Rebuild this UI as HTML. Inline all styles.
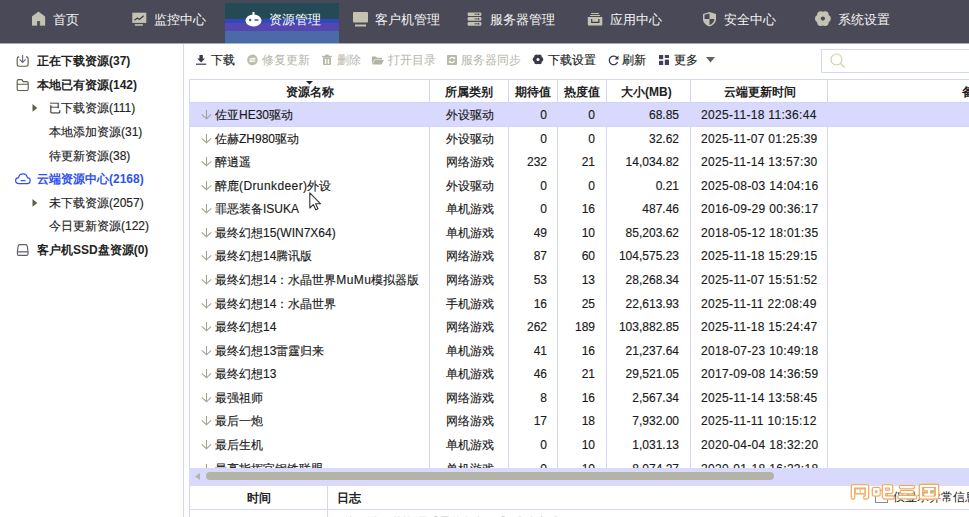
<!DOCTYPE html>
<html><head><meta charset="utf-8">
<style>
*{margin:0;padding:0;box-sizing:border-box}
html,body{width:969px;height:517px;overflow:hidden;background:#fff}
body{position:relative;font-family:"Liberation Sans",sans-serif;font-size:12px;color:#222}
.abs{position:absolute}
/* nav */
#nav{position:absolute;left:0;top:0;width:969px;height:43px;background:#4a4957}
#nav .it{position:absolute;top:11.5px;height:16px;color:#f4f4f4;font-size:12.6px;line-height:16px;white-space:nowrap}
#nav svg{position:absolute}
#act{position:absolute;left:225px;top:0;width:114px;height:43px;
 background:linear-gradient(#4a4957 0,#4a4957 3px,#244a56 3px,#244a56 19px,#3148bd 19px,#3148bd 23px,#5546b0 23px,#5546b0 31px,#4a6aa8 31px,#4a6aa8 43px)}
/* sidebar */
#side{position:absolute;left:0;top:43px;width:184px;height:474px;border-right:1px solid #d4d4fd}
#navb{position:absolute;left:0;top:43px;width:969px;height:1px;background:#a9a8b0}
.si{position:absolute;white-space:nowrap;font-size:12px;line-height:16px;color:#222;-webkit-text-stroke-width:0.15px}
.si.b{font-weight:bold;color:#222;-webkit-text-stroke-width:0}
/* toolbar */
.tb{position:absolute;top:52px;font-size:12px;line-height:16px;white-space:nowrap;color:#1a1a1a;-webkit-text-stroke-width:0.15px}
.tb.dis{color:#b5b5ab;-webkit-text-stroke-width:0}
#search{position:absolute;left:821px;top:49px;width:160px;height:24px;border:1px solid #d4d4fd;background:#fff}
/* table */
#grid{position:absolute;left:189px;top:79px;width:800px;height:389px;border-left:1px solid #d4d4fd;border-top:1px solid #d4d4fd;overflow:hidden}
.vl{position:absolute;top:79px;width:1px;height:389px;background:#d4d4fd}
.hd{position:absolute;top:84px;font-weight:bold;font-size:12px;line-height:16px;white-space:nowrap;color:#222}
.row{position:absolute;left:189px;width:780px;height:24px;font-size:12px;line-height:24px;white-space:nowrap;color:#1a1a1a;-webkit-text-stroke-width:0.15px}
.row.sel{background:#d9d9fe;z-index:2;height:25px;border-top:1px solid #d2d2fd;border-bottom:1px solid #d2d2fd}
.row.sel span{top:0}
.row.sel .arr{top:6px}
.row span{position:absolute;top:1px}
.arr{position:absolute;left:12px;top:7px}
.c0{left:26px}
.c1{left:257px}
.c2{left:298px;width:60px;text-align:right}
.c3{left:346px;width:60px;text-align:right}
.c4{left:400px;width:90px;text-align:right}
.c5{left:512px;letter-spacing:0.32px}
/* scrollbar */
#hs{position:absolute;left:189px;top:468px;width:780px;height:18px;background:#d9d9fe}
#thumb{position:absolute;left:17px;top:3.5px;width:568px;height:8.5px;border-radius:4.5px;background:#b4b4a6}
/* log table */
#log{position:absolute;left:189px;top:486px;width:780px;height:31px;border-left:1px solid #d4d4fd}
</style></head><body>
<div id="nav">
  <div id="act"></div>
  <!-- home -->
  <svg style="left:32px;top:11px" width="14" height="15" viewBox="0 0 14 15"><path d="M6.5 0.8 L13 5.6 V14.4 H8.1 V9.9 H5 V14.4 H0 V5.6 Z" fill="#c4c3b2" stroke="#c4c3b2" stroke-width="0.3" stroke-linejoin="round"/></svg>
  <div class="it" style="left:53px">首页</div>
  <!-- monitor -->
  <svg style="left:132px;top:12px" width="16" height="15" viewBox="0 0 16 15"><rect x="0.3" y="0.7" width="14" height="10.2" fill="#c4c3b2"/><path d="M2.4 8.3 L5.4 6.1 L7.3 7.5 L11.7 3.7" stroke="#3c3b4a" stroke-width="1.2" fill="none"/><rect x="2.8" y="12.2" width="8.1" height="1.5" fill="#c4c3b2"/></svg>
  <div class="it" style="left:154px">监控中心</div>
  <!-- robot -->
  <svg style="left:245px;top:12px" width="17" height="15" viewBox="0 0 17 15"><rect x="7.5" y="0" width="2" height="3" fill="#fff"/><ellipse cx="8.5" cy="8.5" rx="8" ry="6" fill="#fff"/><circle cx="5.2" cy="8" r="1.2" fill="#3b50b6"/><rect x="9.5" y="7.3" width="4" height="1.5" fill="#3b50b6"/></svg>
  <div class="it" style="left:269px;color:#fff">资源管理</div>
  <!-- client -->
  <svg style="left:353px;top:12px" width="16" height="15" viewBox="0 0 16 15"><rect x="0" y="0" width="15" height="10.5" rx="1" fill="#c4c3b2"/><rect x="2" y="12.5" width="11" height="2" fill="#c4c3b2"/></svg>
  <div class="it" style="left:375px">客户机管理</div>
  <!-- server -->
  <svg style="left:467px;top:12px" width="16" height="15" viewBox="0 0 16 15"><g fill="#c4c3b2"><rect x="0.6" y="0.4" width="13.8" height="3.7" rx="1.3"/><rect x="0.6" y="5.1" width="13.8" height="3.7" rx="1.3"/><rect x="0.6" y="9.9" width="13.8" height="3.9" rx="1.3"/></g><g fill="#505068"><rect x="7.5" y="1.7" width="3" height="1"/><rect x="7.5" y="6.4" width="3" height="1"/><rect x="7.5" y="11.3" width="3" height="1"/></g><g fill="#2a2a33"><rect x="10.8" y="1.6" width="1.5" height="1.3"/><rect x="10.8" y="6.3" width="1.5" height="1.3"/><rect x="10.8" y="11.2" width="1.5" height="1.3"/></g></svg>
  <div class="it" style="left:490px">服务器管理</div>
  <!-- app -->
  <svg style="left:587px;top:12px" width="16" height="15" viewBox="0 0 16 15"><g fill="#c4c3b2"><rect x="4" y="0.9" width="8" height="1.2" rx="0.5"/><rect x="3" y="3" width="10.2" height="1.1" rx="0.5"/><path d="M0.8 5 H15.3 V12.5 Q15.3 13.4 14.4 13.4 H1.7 Q0.8 13.4 0.8 12.5 Z"/></g><path d="M4.7 7 V10.3 H11.9 V7" stroke="#3c3b4a" stroke-width="1.2" fill="none"/></svg>
  <div class="it" style="left:610px">应用中心</div>
  <!-- shield -->
  <svg style="left:703px;top:12px" width="14" height="15" viewBox="0 0 14 15"><path d="M6.5 0 L13 2 V7 C13 11 9.5 13.5 6.5 14.5 C3.5 13.5 0 11 0 7 V2 Z" fill="#c4c3b2"/><path d="M6.5 1.5 V7 H1.5 V2.8 Z M6.5 7 H11.5 C11.3 10 9 12.2 6.5 13 Z" fill="#4a4957"/></svg>
  <div class="it" style="left:724px">安全中心</div>
  <!-- gear -->
  <svg style="left:815px;top:11px" width="16" height="16" viewBox="0 0 16 16"><g fill="#c4c3b2"><circle cx="12.2" cy="7.6" r="3.6"/><circle cx="10.05" cy="11.3" r="3.6"/><circle cx="5.75" cy="11.3" r="3.6"/><circle cx="3.6" cy="7.6" r="3.6"/><circle cx="5.75" cy="3.85" r="3.6"/><circle cx="10.05" cy="3.85" r="3.6"/><circle cx="7.9" cy="7.6" r="4"/></g><circle cx="7.9" cy="7.6" r="2.1" fill="#4a4957"/></svg>
  <div class="it" style="left:838px">系统设置</div>
</div>

<div id="side"></div><div id="navb"></div><div class="abs" style="left:225px;top:43px;width:114px;height:1px;background:#a8b6d4"></div>
<!-- sidebar icons -->
<svg class="abs" style="left:15px;top:53px" width="15" height="15" viewBox="0 0 15 15"><path d="M4.3 3.9 H4 Q2.2 3.9 2.2 5.7 V11.5 Q2.2 13.2 4 13.2 H11.3 Q13.1 13.2 13.1 11.5 V5.7 Q13.1 3.9 11.3 3.9 H11" stroke="#5e5e48" stroke-width="1.15" fill="none"/><path d="M7.6 2 V9.3 M4.6 6.4 L7.6 9.4 L10.6 6.4" stroke="#6a6a80" stroke-width="1.15" fill="none"/></svg>
<div class="si b" style="left:37px;top:53px">正在下载资源(37)</div>
<svg class="abs" style="left:15px;top:77px" width="15" height="15" viewBox="0 0 15 15"><path d="M2.2 4 Q2.2 2.6 3.6 2.6 H6.8 L8.3 4.6 H11.8 Q13.2 4.6 13.2 6 V12 Q13.2 13.5 11.8 13.5 H3.6 Q2.2 13.5 2.2 12 Z M2.2 7.2 H13.2" stroke="#5e5e48" stroke-width="1.15" fill="none"/></svg>
<div class="si b" style="left:37px;top:77px">本地已有资源(142)</div>
<svg class="abs" style="left:32px;top:104px" width="6" height="9" viewBox="0 0 6 9"><path d="M0.5 0 L5.3 3.9 L0.5 7.8Z" fill="#5f5f4c"/></svg>
<div class="si" style="left:49px;top:100px">已下载资源(111)</div>
<div class="si" style="left:49px;top:124px">本地添加资源(31)</div>
<div class="si" style="left:49px;top:148px">待更新资源(38)</div>
<svg class="abs" style="left:14px;top:172px" width="18" height="14" viewBox="0 0 18 14"><path d="M5 11.6 C2.8 11.6 1.6 10.3 1.6 8.6 C1.6 7 2.8 5.8 4.5 5.7 C5 3.3 6.8 1.8 9 1.8 C11.3 1.8 13 3.4 13.4 5.7 C15 5.9 16.2 7.1 16.2 8.7 C16.2 10.4 15 11.6 13 11.6 Z" stroke="#3152ee" stroke-width="1.2" fill="none"/><path d="M7.2 8.6 H11" stroke="#3152ee" stroke-width="1.1" stroke-linecap="round"/></svg>
<div class="si b" style="left:37px;top:171px;color:#3152ee">云端资源中心(2168)</div>
<svg class="abs" style="left:32px;top:198.5px" width="6" height="9" viewBox="0 0 6 9"><path d="M0.5 0 L5.3 3.9 L0.5 7.8Z" fill="#5f5f4c"/></svg>
<div class="si" style="left:49px;top:195px">未下载资源(2057)</div>
<div class="si" style="left:49px;top:218px">今日更新资源(122)</div>
<svg class="abs" style="left:15px;top:242px" width="15" height="15" viewBox="0 0 15 15"><path d="M4.8 2.6 H10.6 Q12 2.6 12.2 4 L13 9.5 V12 Q13 13.4 11.6 13.4 H3.8 Q2.4 13.4 2.4 12 V9.5 L3.2 4 Q3.4 2.6 4.8 2.6 Z M2.4 9.8 H13" stroke="#5e5e6a" stroke-width="1.15" fill="none"/></svg>
<div class="si b" style="left:37px;top:242px">客户机SSD盘资源(0)</div>

<!-- toolbar -->
<svg class="abs" style="left:196px;top:55px" width="11" height="10" viewBox="0 0 11 10"><path d="M3.4 0 H6.8 V3.6 H9 L5.1 7.4 L1.2 3.6 H3.4 Z" fill="#3a3a48"/><rect x="0" y="8.6" width="10.2" height="1.2" fill="#3a3a48"/></svg>
<div class="tb" style="left:211px">下载</div>
<svg class="abs" style="left:247px;top:54px" width="11" height="12" viewBox="0 0 11 12"><circle cx="5.4" cy="5.9" r="5.3" fill="#bcbcac"/><g stroke="#fff" stroke-width="1.2" fill="none"><path d="M2.4 4.8 H8 M2.8 7.2 H8.4"/></g><g fill="#fff"><path d="M6.6 3.2 L8.8 4.8 L6.6 6 Z"/><path d="M4.2 5.8 L2 7.2 L4.2 8.6 Z"/></g></svg>
<div class="tb dis" style="left:262px">修复更新</div>
<svg class="abs" style="left:322px;top:54px" width="10" height="12" viewBox="0 0 10 12"><g fill="#b8b8a8"><rect x="3.2" y="0.6" width="3.6" height="1.6" rx="0.6"/><rect x="0" y="1.8" width="10" height="1.3"/><path d="M1 3.3 H9 V10.2 Q9 11 8.2 11 H1.8 Q1 11 1 10.2 Z"/></g><g fill="#fff"><rect x="2.9" y="5" width="1.4" height="4.8"/><rect x="5.7" y="5" width="1.4" height="4.8"/></g></svg>
<div class="tb dis" style="left:337px">删除</div>
<svg class="abs" style="left:372px;top:56px" width="12" height="9" viewBox="0 0 12 9"><path d="M0 0.5 H4 L5 1.8 H10 V3.5 H2.5 L0 8.5 Z" fill="#b3b3a6"/><path d="M2.8 4 H12 L9.5 8.5 H0.5 Z" fill="#b3b3a6"/></svg>
<div class="tb dis" style="left:388px">打开目录</div>
<svg class="abs" style="left:447px;top:55px" width="10" height="10" viewBox="0 0 10 10"><rect x="0" y="0" width="10" height="10" rx="1" fill="#b8b8a8"/><g stroke="#fff" stroke-width="1.3" fill="none"><path d="M2.6 4.2 A2.6 2.6 0 0 1 7.3 3.6"/><path d="M7.4 5.8 A2.6 2.6 0 0 1 2.7 6.4"/></g><g fill="#fff"><path d="M6.2 2.6 L8.4 2.4 L8 4.8 Z"/><path d="M3.8 7.4 L1.6 7.6 L2 5.2 Z"/></g></svg>
<div class="tb dis" style="left:461px">服务器同步</div>
<svg class="abs" style="left:532px;top:54px" width="12" height="11" viewBox="0 0 12 11"><g fill="#3a3a48"><circle cx="8.9" cy="5.4" r="2.4"/><circle cx="7.45" cy="7.91" r="2.4"/><circle cx="4.55" cy="7.91" r="2.4"/><circle cx="3.1" cy="5.4" r="2.4"/><circle cx="4.55" cy="2.89" r="2.4"/><circle cx="7.45" cy="2.89" r="2.4"/><circle cx="6" cy="5.4" r="3"/></g><circle cx="6" cy="5.4" r="1.5" fill="#fff"/></svg>
<div class="tb" style="left:548px">下载设置</div>
<svg class="abs" style="left:608px;top:55px" width="11" height="11" viewBox="0 0 11 11"><path d="M9.3 3.2 A4.3 4.3 0 1 0 9.6 7" stroke="#3a3a50" stroke-width="1.3" fill="none"/><path d="M10.5 0.5 V4.5 H6.5 Z" fill="#3a3a50"/></svg>
<div class="tb" style="left:622px">刷新</div>
<svg class="abs" style="left:659px;top:55px" width="10" height="10" viewBox="0 0 10 10"><g fill="#40405a"><rect x="0" y="0" width="4.2" height="4.2"/><rect x="5.8" y="0" width="4.2" height="3"/><rect x="0" y="5.8" width="4.2" height="4.2"/><rect x="5.8" y="4.6" width="4.2" height="5.4"/></g></svg>
<div class="tb" style="left:674px">更多</div>
<svg class="abs" style="left:706px;top:57px" width="9" height="6" viewBox="0 0 9 6"><path d="M0 0 H9 L4.5 5.5 Z" fill="#666658"/></svg>
<div id="search"></div>
<svg class="abs" style="left:830px;top:53px" width="16" height="16" viewBox="0 0 16 16"><circle cx="6.5" cy="6.5" r="5.5" stroke="#d2d2a8" stroke-width="1.2" fill="none"/><path d="M10.5 10.5 L14.5 14.5" stroke="#d2d2a8" stroke-width="1.3"/></svg>

<!-- grid -->
<div class="abs" style="left:189px;top:79px;width:780px;height:1px;background:#d4d4fd"></div>
<div class="abs" style="left:189px;top:79px;width:1px;height:438px;background:#d4d4fd"></div>
<div class="vl" style="left:429px"></div>
<div class="vl" style="left:508px"></div>
<div class="vl" style="left:557px"></div>
<div class="vl" style="left:606px"></div>
<div class="vl" style="left:690px"></div>
<div class="vl" style="left:827px"></div>
<svg class="abs" style="left:306px;top:81px" width="7" height="4" viewBox="0 0 7 4"><path d="M0 0 H7 L3.5 3.5 Z" fill="#222"/></svg>
<div class="hd" style="left:286px">资源名称</div>
<div class="hd" style="left:445px">所属类别</div>
<div class="hd" style="left:515px">期待值</div>
<div class="hd" style="left:564px">热度值</div>
<div class="hd" style="left:621px">大小(MB)</div>
<div class="hd" style="left:724px">云端更新时间</div>
<div class="hd" style="left:962px">备注</div>
<div id="rows">
<div class="row sel" style="top:102.00px"><svg class="arr" width="11" height="11" viewBox="0 0 11 11"><path d="M5.5 1 V9.8 M0.8 5.4 L5.5 9.8 L10.2 5.4" stroke="#a2a290" stroke-width="1.1" fill="none"/></svg><span class="c0">佐亚HE30驱动</span><span class="c1">外设驱动</span><span class="c2">0</span><span class="c3">0</span><span class="c4">68.85</span><span class="c5">2025-11-18 11:36:44</span></div>
<div class="row" style="top:125.57px"><svg class="arr" width="11" height="11" viewBox="0 0 11 11"><path d="M5.5 1 V9.8 M0.8 5.4 L5.5 9.8 L10.2 5.4" stroke="#a2a290" stroke-width="1.1" fill="none"/></svg><span class="c0">佐赫ZH980驱动</span><span class="c1">外设驱动</span><span class="c2">0</span><span class="c3">0</span><span class="c4">32.62</span><span class="c5">2025-11-07 01:25:39</span></div>
<div class="row" style="top:149.14px"><svg class="arr" width="11" height="11" viewBox="0 0 11 11"><path d="M5.5 1 V9.8 M0.8 5.4 L5.5 9.8 L10.2 5.4" stroke="#a2a290" stroke-width="1.1" fill="none"/></svg><span class="c0">醉逍遥</span><span class="c1">网络游戏</span><span class="c2">232</span><span class="c3">21</span><span class="c4">14,034.82</span><span class="c5">2025-11-14 13:57:30</span></div>
<div class="row" style="top:172.71px"><svg class="arr" width="11" height="11" viewBox="0 0 11 11"><path d="M5.5 1 V9.8 M0.8 5.4 L5.5 9.8 L10.2 5.4" stroke="#a2a290" stroke-width="1.1" fill="none"/></svg><span class="c0">醉鹿<b style="font-weight:normal;letter-spacing:0.4px">(Drunkdeer)</b>外设</span><span class="c1">外设驱动</span><span class="c2">0</span><span class="c3">0</span><span class="c4">0.21</span><span class="c5">2025-08-03 14:04:16</span></div>
<div class="row" style="top:196.28px"><svg class="arr" width="11" height="11" viewBox="0 0 11 11"><path d="M5.5 1 V9.8 M0.8 5.4 L5.5 9.8 L10.2 5.4" stroke="#a2a290" stroke-width="1.1" fill="none"/></svg><span class="c0">罪恶装备ISUKA</span><span class="c1">单机游戏</span><span class="c2">0</span><span class="c3">16</span><span class="c4">487.46</span><span class="c5">2016-09-29 00:36:17</span></div>
<div class="row" style="top:219.85px"><svg class="arr" width="11" height="11" viewBox="0 0 11 11"><path d="M5.5 1 V9.8 M0.8 5.4 L5.5 9.8 L10.2 5.4" stroke="#a2a290" stroke-width="1.1" fill="none"/></svg><span class="c0">最终幻想15(WIN7X64)</span><span class="c1">单机游戏</span><span class="c2">49</span><span class="c3">10</span><span class="c4">85,203.62</span><span class="c5">2018-05-12 18:01:35</span></div>
<div class="row" style="top:243.42px"><svg class="arr" width="11" height="11" viewBox="0 0 11 11"><path d="M5.5 1 V9.8 M0.8 5.4 L5.5 9.8 L10.2 5.4" stroke="#a2a290" stroke-width="1.1" fill="none"/></svg><span class="c0">最终幻想14腾讯版</span><span class="c1">网络游戏</span><span class="c2">87</span><span class="c3">60</span><span class="c4">104,575.23</span><span class="c5">2025-11-18 15:29:15</span></div>
<div class="row" style="top:266.99px"><svg class="arr" width="11" height="11" viewBox="0 0 11 11"><path d="M5.5 1 V9.8 M0.8 5.4 L5.5 9.8 L10.2 5.4" stroke="#a2a290" stroke-width="1.1" fill="none"/></svg><span class="c0">最终幻想14：水晶世界<b style="font-weight:normal;letter-spacing:0.4px">MuMu</b>模拟器版</span><span class="c1">网络游戏</span><span class="c2">53</span><span class="c3">13</span><span class="c4">28,268.34</span><span class="c5">2025-11-07 15:51:52</span></div>
<div class="row" style="top:290.56px"><svg class="arr" width="11" height="11" viewBox="0 0 11 11"><path d="M5.5 1 V9.8 M0.8 5.4 L5.5 9.8 L10.2 5.4" stroke="#a2a290" stroke-width="1.1" fill="none"/></svg><span class="c0">最终幻想14：水晶世界</span><span class="c1">手机游戏</span><span class="c2">16</span><span class="c3">25</span><span class="c4">22,613.93</span><span class="c5">2025-11-11 22:08:49</span></div>
<div class="row" style="top:314.13px"><svg class="arr" width="11" height="11" viewBox="0 0 11 11"><path d="M5.5 1 V9.8 M0.8 5.4 L5.5 9.8 L10.2 5.4" stroke="#a2a290" stroke-width="1.1" fill="none"/></svg><span class="c0">最终幻想14</span><span class="c1">网络游戏</span><span class="c2">262</span><span class="c3">189</span><span class="c4">103,882.85</span><span class="c5">2025-11-18 15:24:47</span></div>
<div class="row" style="top:337.70px"><svg class="arr" width="11" height="11" viewBox="0 0 11 11"><path d="M5.5 1 V9.8 M0.8 5.4 L5.5 9.8 L10.2 5.4" stroke="#a2a290" stroke-width="1.1" fill="none"/></svg><span class="c0">最终幻想13雷霆归来</span><span class="c1">单机游戏</span><span class="c2">41</span><span class="c3">16</span><span class="c4">21,237.64</span><span class="c5">2018-07-23 10:49:18</span></div>
<div class="row" style="top:361.27px"><svg class="arr" width="11" height="11" viewBox="0 0 11 11"><path d="M5.5 1 V9.8 M0.8 5.4 L5.5 9.8 L10.2 5.4" stroke="#a2a290" stroke-width="1.1" fill="none"/></svg><span class="c0">最终幻想13</span><span class="c1">单机游戏</span><span class="c2">46</span><span class="c3">21</span><span class="c4">29,521.05</span><span class="c5">2017-09-08 14:36:59</span></div>
<div class="row" style="top:384.84px"><svg class="arr" width="11" height="11" viewBox="0 0 11 11"><path d="M5.5 1 V9.8 M0.8 5.4 L5.5 9.8 L10.2 5.4" stroke="#a2a290" stroke-width="1.1" fill="none"/></svg><span class="c0">最强祖师</span><span class="c1">网络游戏</span><span class="c2">8</span><span class="c3">16</span><span class="c4">2,567.34</span><span class="c5">2025-11-14 13:58:45</span></div>
<div class="row" style="top:408.41px"><svg class="arr" width="11" height="11" viewBox="0 0 11 11"><path d="M5.5 1 V9.8 M0.8 5.4 L5.5 9.8 L10.2 5.4" stroke="#a2a290" stroke-width="1.1" fill="none"/></svg><span class="c0">最后一炮</span><span class="c1">网络游戏</span><span class="c2">17</span><span class="c3">18</span><span class="c4">7,932.00</span><span class="c5">2025-11-11 10:15:12</span></div>
<div class="row" style="top:431.98px"><svg class="arr" width="11" height="11" viewBox="0 0 11 11"><path d="M5.5 1 V9.8 M0.8 5.4 L5.5 9.8 L10.2 5.4" stroke="#a2a290" stroke-width="1.1" fill="none"/></svg><span class="c0">最后生机</span><span class="c1">单机游戏</span><span class="c2">0</span><span class="c3">10</span><span class="c4">1,031.13</span><span class="c5">2020-04-04 18:32:20</span></div>
<div class="row" style="top:455.55px"><svg class="arr" width="11" height="11" viewBox="0 0 11 11"><path d="M5.5 1 V9.8 M0.8 5.4 L5.5 9.8 L10.2 5.4" stroke="#a2a290" stroke-width="1.1" fill="none"/></svg><span class="c0">最高指挥官钢铁联盟</span><span class="c1">单机游戏</span><span class="c2">0</span><span class="c3">10</span><span class="c4">8,074.27</span><span class="c5">2020-01-18 16:22:18</span></div>
</div>
<div id="hs"><svg class="abs" style="left:6px;top:5px" width="5" height="7" viewBox="0 0 5 7"><path d="M5 0 V7 L0 3.5 Z" fill="#b5b5a8"/></svg><div id="thumb"></div></div>
<div class="abs" style="left:189px;top:509px;width:780px;height:1px;background:#d4d4fd"></div>
<div class="abs" style="left:327px;top:486px;width:1px;height:31px;background:#d4d4fd"></div>
<div class="hd" style="left:247px;top:490px">时间</div>
<div class="hd" style="left:337px;top:490px">日志</div>
<div class="abs" style="left:875px;top:490px;width:13px;height:13px;border:1px solid #8a8a9a;background:#fff"></div>
<div class="abs" style="left:893px;top:489px;font-size:12px;line-height:16px;white-space:nowrap">仅显示异常信息</div>
<svg class="abs" style="left:846px;top:479px" width="98" height="26" viewBox="0 0 98 26">
<g fill="none" stroke-linecap="round" stroke-linejoin="round">
<g stroke="#f7d39a" stroke-width="5.6" opacity="0.55"><path d="M7 18.5 V7.4 H21 V17 Q21 18.5 19.3 18.5"/><path d="M10.8 11.3 L12.8 13.1 M12.8 11.3 L10.8 13.1 M15.5 11.3 L17.5 13.1 M17.5 11.3 L15.5 13.1"/>
<path d="M28 10.2 H32.5 V15.3 H28 Z"/><path d="M38 7.4 H45 V12.8 H38 Z M38 12.8 V17 Q38 18.5 40.5 18.5 H46.5"/>
<path d="M55 8.1 H67 M56 13.1 H66 M53.5 18.2 H69"/>
<path d="M75 7 H91 V18.5 H75 Z M79 10.2 H87 M79 15.6 H87 M83 10.2 V15.6"/></g>
<g stroke="#eea95e" stroke-width="4.3"><path d="M7 18.5 V7.4 H21 V17 Q21 18.5 19.3 18.5"/><path d="M10.8 11.3 L12.8 13.1 M12.8 11.3 L10.8 13.1 M15.5 11.3 L17.5 13.1 M17.5 11.3 L15.5 13.1"/>
<path d="M28 10.2 H32.5 V15.3 H28 Z"/><path d="M38 7.4 H45 V12.8 H38 Z M38 12.8 V17 Q38 18.5 40.5 18.5 H46.5"/>
<path d="M55 8.1 H67 M56 13.1 H66 M53.5 18.2 H69"/>
<path d="M75 7 H91 V18.5 H75 Z M79 10.2 H87 M79 15.6 H87 M83 10.2 V15.6"/></g>
<g stroke="#ffffff" stroke-width="2.2"><path d="M7 18.5 V7.4 H21 V17 Q21 18.5 19.3 18.5"/><path d="M10.8 11.3 L12.8 13.1 M12.8 11.3 L10.8 13.1 M15.5 11.3 L17.5 13.1 M17.5 11.3 L15.5 13.1"/>
<path d="M28 10.2 H32.5 V15.3 H28 Z"/><path d="M38 7.4 H45 V12.8 H38 Z M38 12.8 V17 Q38 18.5 40.5 18.5 H46.5"/>
<path d="M55 8.1 H67 M56 13.1 H66 M53.5 18.2 H69"/>
<path d="M75 7 H91 V18.5 H75 Z M79 10.2 H87 M79 15.6 H87 M83 10.2 V15.6"/></g>
</g></svg>
<div class="abs" style="left:343px;top:514px;font-size:12px;line-height:16px;color:#cacaca;white-space:nowrap">从云端下载资源【最终幻想14】成功完成</div>
<svg class="abs" style="left:309px;top:192px;z-index:5" width="14" height="20" viewBox="0 0 14 20"><path d="M0.8 0.8 V16 L4.3 12.6 L6.8 17.8 L9 16.8 L6.6 11.8 H11.6 Z" fill="#fff" stroke="#333" stroke-width="1.1" stroke-linejoin="round"/></svg>
</body></html>
